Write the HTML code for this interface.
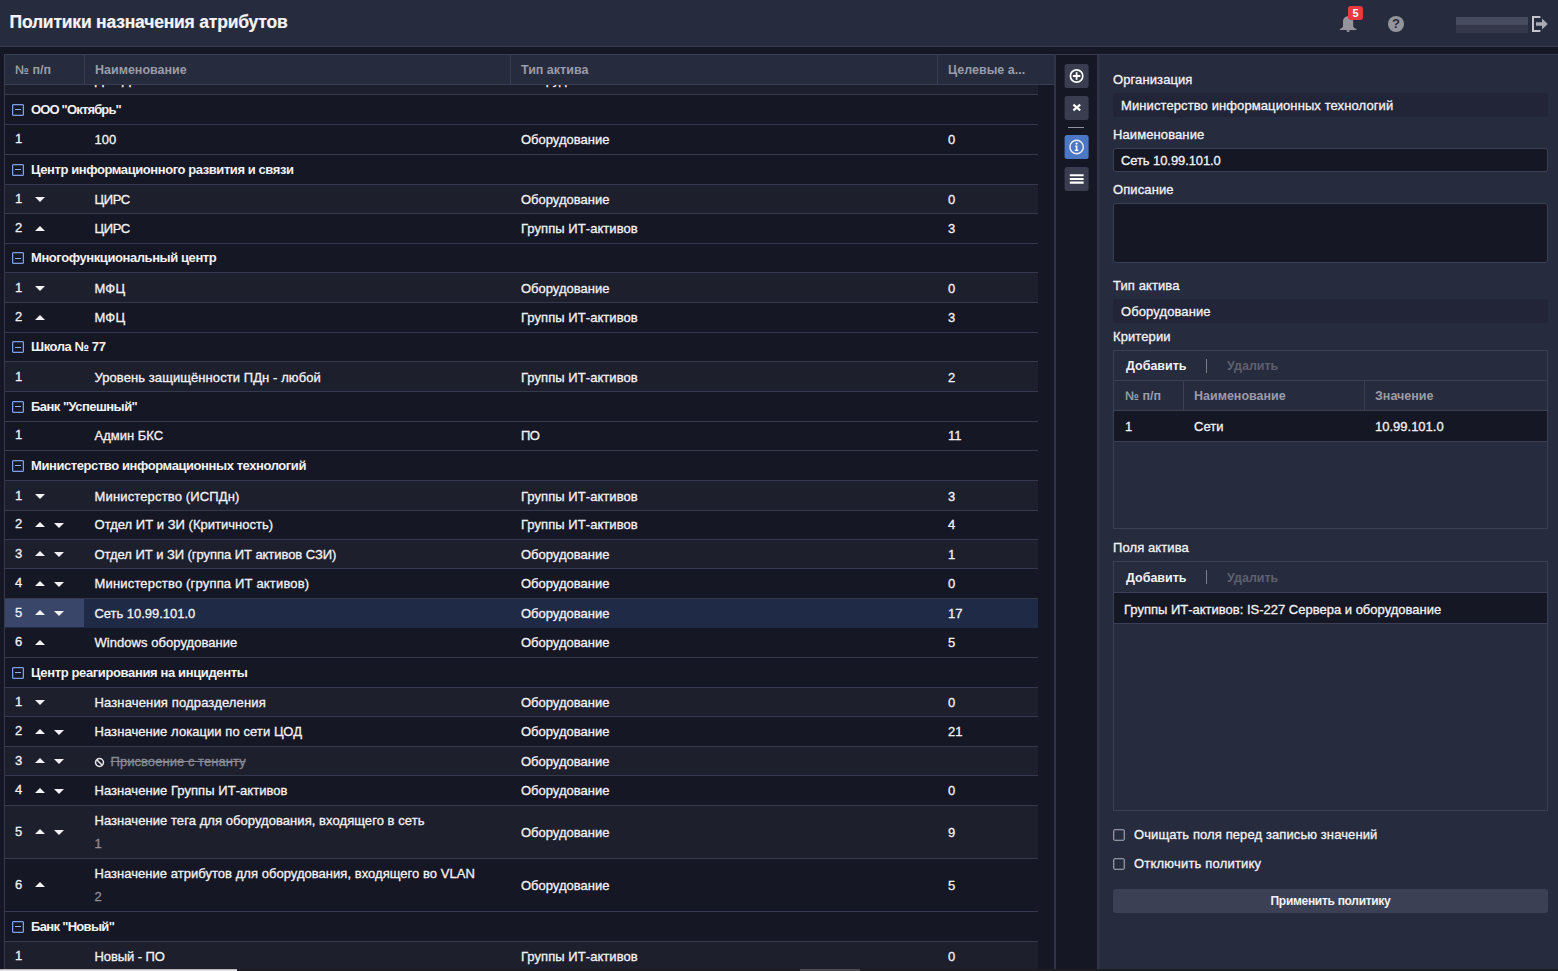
<!DOCTYPE html>
<html lang="ru">
<head>
<meta charset="utf-8">
<title>Политики назначения атрибутов</title>
<style>
*{box-sizing:border-box;margin:0;padding:0}
html,body{width:1558px;height:971px;overflow:hidden;background:#161724}
body{position:relative;font-family:"Liberation Sans",sans-serif;font-size:13px;color:#f2f2f4;-webkit-font-smoothing:antialiased;-webkit-text-stroke:.3px}
b,#hdr span,.box .th span,#apply,#badge,#help{-webkit-text-stroke:0}
i{font-style:normal;display:block}
/* ---------- top bar ---------- */
#top{position:absolute;left:0;top:0;width:1558px;height:47px;background:#272b3e;border-bottom:1px solid #3a3e53}
#title{-webkit-text-stroke:.2px;position:absolute;left:9.5px;top:10px;font-size:17.5px;font-weight:bold;line-height:24px;color:#f4f4f6;white-space:nowrap;letter-spacing:-0.2px}
#bell{position:absolute;left:1339px;top:15px;width:18px;height:18px}
#badge{position:absolute;left:1348px;top:6px;width:15px;height:14px;border-radius:3px;background:#e9383f;color:#fff;font-size:11px;font-weight:bold;line-height:14px;text-align:center}
#help{position:absolute;left:1388px;top:16px;width:16px;height:16px;border-radius:50%;background:#94959c;color:#272b3e;font-size:13px;font-weight:bold;line-height:16px;text-align:center}
#user{position:absolute;left:1456px;top:17px;width:72px;height:16px;background:linear-gradient(#474b5f 0,#474b5f 50%,#35384b 50%,#35384b 100%)}
#logout{position:absolute;left:1531px;top:15px;width:17px;height:18px}
/* ---------- grid ---------- */
#grid{position:absolute;left:0;top:0;width:1056px;height:971px}
#gl{position:absolute;left:4px;top:54px;width:1px;height:915px;background:#363a4e}
#hdr{position:absolute;left:4px;top:54px;width:1051px;height:31px;background:#272b3e;border:1px solid #3a3e53;border-right-color:#3a3e53}
#hdr span{position:absolute;top:0;height:29px;line-height:30px;font-weight:bold;color:#9a9ca8;white-space:nowrap;font-size:12.5px}
#hdr u{position:absolute;top:0;width:1px;height:29px;background:#3a3e53;text-decoration:none}
#scrollcol{position:absolute;left:1038px;top:85px;width:16px;height:884px;background:#161724}
#vline{position:absolute;left:1054px;top:54px;width:2px;height:915px;background:#30344a}
.r{position:absolute;left:5px;width:1033px;background:#161724;border-bottom:1px solid #35394c;white-space:nowrap;overflow:hidden}
.r.alt{background:#1e1f2d}
.r.sel{background:#1f2a47;border-bottom-color:#1f2a47}
.r.sel:before{content:"";position:absolute;left:0;top:0;width:79px;height:100%;background:#3a4669}
.r span,.r b{position:absolute;top:0;bottom:0;display:flex;align-items:center;line-height:16px}
.r .c1{transform:translateY(-1px)}
.r.alt .c1,.r.sel .c1{transform:none}
.r.alt .c2,.r.alt .c3,.r.alt .c4,.r.sel .c2,.r.sel .c3,.r.sel .c4{transform:translateY(1px)}
.r.tall .c2,.r.ns .c2,.r.ns .c3,.r.ns .c4{transform:none}
.r.tall .c3,.r.tall .c4{transform:translateY(1px)}
.r.tall .c1{transform:none}
.r.ns .c1{transform:translateY(-1px)}
.r .c1{left:10px}
.r .c2{left:89.5px}
.r .c3{left:516px}
.r .c4{left:943px}
.r.grp b{left:26px;font-weight:bold;letter-spacing:-0.42px}
.r .clip{top:-13px;bottom:auto;height:16px}
.bx{position:absolute;left:7px;top:50%;margin-top:-6px;width:12px;height:12px;border:1px solid #7d9fe6;border-radius:1px;box-shadow:inset 0 0 0 .5px rgba(125,159,230,.55)}
.bx:after{content:"";position:absolute;left:2px;right:2px;top:4.5px;height:1px;background:#8fb0f2}
.up,.dn{position:absolute;top:50%;width:0;height:0;border-left:5px solid transparent;border-right:5px solid transparent}
.up{border-bottom:5px solid #f2f2f4;margin-top:-3px}
.dn{border-top:5px solid #f2f2f4;margin-top:-2px}
.a1{left:30px}
.a2{left:49px}
.r .dis{color:#878993}
.r .dis s{text-decoration:line-through}
.ban{width:11px;height:11px;margin-left:-.5px;margin-right:5.5px;flex:none}
.r .two{display:block}
.r .two .l1{top:7px;bottom:auto;height:16px;left:0}
.r .two .l2{top:30px;bottom:auto;height:16px;left:0;color:#8c8e99}
/* ---------- toolbar ---------- */
#tb{position:absolute;left:1056px;top:54px;width:41px;height:915px;background:#161724}
.tbtn{position:absolute;left:1064px;width:25px;height:24px}
.tbtn svg{position:absolute;left:0;top:0;width:25px;height:24px}
#tsep{position:absolute;left:1068px;top:127px;width:16px;height:1px;background:#8f919c}
/* ---------- panel ---------- */
#panel{position:absolute;left:1097px;top:54px;width:461px;height:915px;background:#272b3e;border-left:2px solid #30344a}
.lbl{position:absolute;left:1113px;height:16px;line-height:16px;white-space:nowrap;color:#f2f2f4;letter-spacing:.1px}
.ro{position:absolute;left:1113px;width:435px;height:24px;background:#222537;border-radius:3px;line-height:26px;padding-left:8px;white-space:nowrap;letter-spacing:.1px;overflow:hidden}
.inp{position:absolute;left:1113px;width:435px;background:#161724;border:1px solid #3b3f53;border-radius:3px;line-height:24px;padding-left:7px;white-space:nowrap;overflow:hidden}
.box{position:absolute;left:1113px;width:435px;border:1px solid #3b3f53}
.box .bar{position:absolute;left:0;top:0;width:100%;height:30px;border-bottom:1px solid #3b3f53}
.box .bar b{position:absolute;top:0;line-height:31px;font-size:12.5px}
.box .bar .sep{position:absolute;left:92px;top:8px;width:1px;height:14px;background:#7a7c88}
.box .row{position:absolute;left:0;width:100%;height:30px;background:#161724;border-bottom:1px solid #3b3f53}
.box .row span,.box .th span{position:absolute;top:0;line-height:30px;white-space:nowrap}
.box .row span{line-height:32px}
.box .th{position:absolute;left:0;top:30px;width:100%;height:30px;border-bottom:1px solid #3b3f53}
.box .th span{font-weight:bold;color:#9a9ca8;font-size:12.5px}
.box .th u{position:absolute;top:0;width:1px;height:29px;background:#3b3f53}
.cb{position:absolute;left:1113px;width:12px;height:12px;border:1px solid #9092a0;border-radius:2px;box-shadow:inset 0 0 0 .6px rgba(144,146,160,.6)}
#apply{position:absolute;left:1113px;top:889px;width:435px;height:24px;border-radius:3px;background:#3c4055;font-weight:bold;font-size:12px;line-height:24px;text-align:center;color:#f2f2f4;letter-spacing:-0.3px}
.b2 .bar{height:31px!important}
.b2 .bar b{line-height:33px!important}
.b2 .row span{line-height:33px!important}
#topline{position:absolute;left:1056px;top:54px;width:502px;height:1px;background:#363a4e}
#bottom{position:absolute;left:0;top:969px;width:1558px;height:2px;background:#1d1d1f}
#bottom i{position:absolute;top:0;height:2px}
</style>
</head>
<body>
<div id="grid">
<div id="gl"></div>
<div class="r alt" style="top:85px;height:10px"><span class="clip" style="left:90px">Для ДИТ</span><span class="clip" style="left:516px">Оборудование</span></div>
<div class="r grp" style="top:95px;height:30px"><i class="bx"></i><b style="letter-spacing:-0.835px">ООО "Октябрь"</b></div>
<div class="r" style="top:125px;height:30px"><span class="c1">1</span><span class="c2">100</span><span class="c3">Оборудование</span><span class="c4">0</span></div>
<div class="r grp" style="top:155px;height:30px"><i class="bx"></i><b>Центр информационного развития и связи</b></div>
<div class="r alt" style="top:185px;height:29px"><span class="c1">1</span><i class="dn a1"></i><span class="c2" style="letter-spacing:-0.375px">ЦИРС</span><span class="c3">Оборудование</span><span class="c4">0</span></div>
<div class="r" style="top:214px;height:30px"><span class="c1">2</span><i class="up a1"></i><span class="c2" style="letter-spacing:-0.375px">ЦИРС</span><span class="c3" style="letter-spacing:0.059px">Группы ИТ-активов</span><span class="c4">3</span></div>
<div class="r grp" style="top:244px;height:29px"><i class="bx"></i><b>Многофункциональный центр</b></div>
<div class="r alt" style="top:273px;height:30px"><span class="c1">1</span><i class="dn a1"></i><span class="c2" style="letter-spacing:0.167px">МФЦ</span><span class="c3">Оборудование</span><span class="c4">0</span></div>
<div class="r" style="top:303px;height:30px"><span class="c1">2</span><i class="up a1"></i><span class="c2" style="letter-spacing:0.167px">МФЦ</span><span class="c3" style="letter-spacing:0.059px">Группы ИТ-активов</span><span class="c4">3</span></div>
<div class="r grp" style="top:333px;height:29px"><i class="bx"></i><b>Школа № 77</b></div>
<div class="r alt" style="top:362px;height:30px"><span class="c1">1</span><span class="c2" style="letter-spacing:0.078px">Уровень защищённости ПДн - любой</span><span class="c3" style="letter-spacing:0.059px">Группы ИТ-активов</span><span class="c4">2</span></div>
<div class="r grp" style="top:392px;height:30px"><i class="bx"></i><b style="letter-spacing:-0.533px">Банк "Успешный"</b></div>
<div class="r" style="top:422px;height:29px"><span class="c1">1</span><span class="c2">Админ БКС</span><span class="c3" style="letter-spacing:-0.500px">ПО</span><span class="c4">11</span></div>
<div class="r grp" style="top:451px;height:30px"><i class="bx"></i><b>Министерство информационных технологий</b></div>
<div class="r alt" style="top:481px;height:30px"><span class="c1">1</span><i class="dn a1"></i><span class="c2" style="letter-spacing:0.150px">Министерство (ИСПДн)</span><span class="c3" style="letter-spacing:0.059px">Группы ИТ-активов</span><span class="c4">3</span></div>
<div class="r" style="top:511px;height:29px"><span class="c1">2</span><i class="up a1"></i><i class="dn a2"></i><span class="c2" style="letter-spacing:0.019px">Отдел ИТ и ЗИ (Критичность)</span><span class="c3" style="letter-spacing:0.059px">Группы ИТ-активов</span><span class="c4">4</span></div>
<div class="r alt" style="top:540px;height:29px"><span class="c1">3</span><i class="up a1"></i><i class="dn a2"></i><span class="c2" style="letter-spacing:-0.054px">Отдел ИТ и ЗИ (группа ИТ активов СЗИ)</span><span class="c3">Оборудование</span><span class="c4">1</span></div>
<div class="r" style="top:569px;height:30px"><span class="c1">4</span><i class="up a1"></i><i class="dn a2"></i><span class="c2" style="letter-spacing:0.172px">Министерство (группа ИТ активов)</span><span class="c3">Оборудование</span><span class="c4">0</span></div>
<div class="r sel" style="top:599px;height:29px"><span class="c1">5</span><i class="up a1"></i><i class="dn a2"></i><span class="c2" style="letter-spacing:-0.031px">Сеть 10.99.101.0</span><span class="c3">Оборудование</span><span class="c4">17</span></div>
<div class="r" style="top:628px;height:30px"><span class="c1">6</span><i class="up a1"></i><span class="c2" style="letter-spacing:0.050px">Windows оборудование</span><span class="c3">Оборудование</span><span class="c4">5</span></div>
<div class="r grp" style="top:658px;height:30px"><i class="bx"></i><b style="letter-spacing:-0.365px">Центр реагирования на инциденты</b></div>
<div class="r alt" style="top:688px;height:29px"><span class="c1">1</span><i class="dn a1"></i><span class="c2" style="letter-spacing:0.146px">Назначения подразделения</span><span class="c3">Оборудование</span><span class="c4">0</span></div>
<div class="r" style="top:717px;height:30px"><span class="c1">2</span><i class="up a1"></i><i class="dn a2"></i><span class="c2" style="letter-spacing:0.067px">Назначение локации по сети ЦОД</span><span class="c3">Оборудование</span><span class="c4">21</span></div>
<div class="r alt" style="top:747px;height:29px"><span class="c1">3</span><i class="up a1"></i><i class="dn a2"></i><span class="c2 dis"><svg class="ban" viewBox="0 0 12 12"><circle cx="6" cy="6" r="4.3" fill="none" stroke="#e4e4e8" stroke-width="1.7"/><path d="M3 3 L9 9" stroke="#e4e4e8" stroke-width="1.7"/></svg><s style="letter-spacing:0.050px">Присвоение с тенанту</s></span><span class="c3">Оборудование</span><span class="c4"></span></div>
<div class="r" style="top:776px;height:30px"><span class="c1">4</span><i class="up a1"></i><i class="dn a2"></i><span class="c2" style="letter-spacing:0.054px">Назначение Группы ИТ-активов</span><span class="c3">Оборудование</span><span class="c4">0</span></div>
<div class="r alt tall" style="top:806px;height:53px"><span class="c1">5</span><i class="up a1"></i><i class="dn a2"></i><span class="c2 two"><span class="l1" style="letter-spacing:0.060px">Назначение тега для оборудования, входящего в сеть</span><span class="l2">1</span></span><span class="c3">Оборудование</span><span class="c4">9</span></div>
<div class="r tall" style="top:859px;height:53px"><span class="c1">6</span><i class="up a1"></i><span class="c2 two"><span class="l1" style="letter-spacing:0.036px">Назначение атрибутов для оборудования, входящего во VLAN</span><span class="l2">2</span></span><span class="c3">Оборудование</span><span class="c4">5</span></div>
<div class="r grp" style="top:912px;height:30px"><i class="bx"></i><b style="letter-spacing:-0.678px">Банк "Новый"</b></div>
<div class="r alt ns" style="top:942px;height:30px"><span class="c1">1</span><span class="c2" style="letter-spacing:-0.100px">Новый - ПО</span><span class="c3" style="letter-spacing:0.059px">Группы ИТ-активов</span><span class="c4">0</span></div>
<div id="hdr">
<span style="left:10px">№ п/п</span><u style="left:79px"></u>
<span style="left:90px">Наименование</span><u style="left:505px"></u>
<span style="left:516px">Тип актива</span><u style="left:932px"></u>
<span style="left:943px">Целевые а...</span>
</div>
<div id="scrollcol"></div>
<div id="vline"></div>
</div>

<div id="tb"></div>
<div class="tbtn" style="top:64px"><svg viewBox="0 0 25 24"><rect x=".6" y="0" width="24" height="24" rx="2.500" fill="#3a3d4f"/><g transform="translate(.6 0)"><circle cx="12" cy="12" r="6.2" fill="none" stroke="#fff" stroke-width="1.7"/><path d="M12 8.3v7.4M8.3 12h7.4" stroke="#fff" stroke-width="1.8" fill="none"/></g></svg></div>
<div class="tbtn" style="top:96px"><svg viewBox="0 0 25 24"><rect x=".6" y="0" width="24" height="24" rx="2.500" fill="#3a3d4f"/><g transform="translate(.6 0)"><path d="M8.800 8.700L15.600 14.400M15.600 8.700L8.800 14.400" stroke="#fff" stroke-width="2.200" fill="none"/></g></svg></div>
<div id="tsep"></div>
<div class="tbtn" style="top:135px"><svg viewBox="0 0 25 24"><rect x=".6" y="0" width="24" height="24" rx="2.500" fill="#4a78c4"/><g transform="translate(.6 0)"><circle cx="12" cy="12" r="6.700" fill="none" stroke="#f1ecf3" stroke-width="1.400"/><path d="M10.6 10.6h2.2v4.2h1v1.2h-3.6v-1.2h1v-3h-.6z" fill="#fff"/><circle cx="12" cy="8.6" r="1.1" fill="#fff"/></g></svg></div>
<div class="tbtn" style="top:167px"><svg viewBox="0 0 25 24"><rect x=".6" y="0" width="24" height="24" rx="2.500" fill="#3a3d4f"/><g transform="translate(.6 0)"><path d="M5.200 8.300h13.800M5.200 12h13.800M5.200 15.600h13.800" stroke="#fff" stroke-width="2.100" fill="none"/></g></svg></div>

<div id="panel"></div>
<div id="topline"></div>
<div class="lbl" style="top:72px">Организация</div>
<div class="ro" style="top:93px">Министерство информационных технологий</div>
<div class="lbl" style="top:127px">Наименование</div>
<div class="inp" style="top:148px;height:24px;letter-spacing:-.09px">Сеть 10.99.101.0</div>
<div class="lbl" style="top:182px">Описание</div>
<div class="inp" style="top:203px;height:60px"></div>
<div class="lbl" style="top:278px">Тип актива</div>
<div class="ro" style="top:299px">Оборудование</div>
<div class="lbl" style="top:329px">Критерии</div>
<div class="box" style="top:350px;height:179px">
  <div class="bar"><b style="left:12px">Добавить</b><i class="sep"></i><b style="left:113px;color:#5d6070">Удалить</b></div>
  <div class="th"><span style="left:11px">№ п/п</span><u style="left:69px"></u><span style="left:80px">Наименование</span><u style="left:250px"></u><span style="left:261px">Значение</span></div>
  <div class="row" style="top:60px;height:31px"><span style="left:11px">1</span><span style="left:80px">Сети</span><span style="left:261px">10.99.101.0</span></div>
</div>
<div class="lbl" style="top:540px">Поля актива</div>
<div class="box b2" style="top:561px;height:250px">
  <div class="bar"><b style="left:12px">Добавить</b><i class="sep"></i><b style="left:113px;color:#5d6070">Удалить</b></div>
  <div class="row" style="top:31px;height:31px"><span style="left:10px">Группы ИТ-активов: IS-227 Сервера и оборудование</span></div>
</div>
<i class="cb" style="top:829px"></i><div class="lbl" style="left:1134px;top:827px">Очищать поля перед записью значений</div>
<i class="cb" style="top:858px"></i><div class="lbl" style="left:1134px;top:856px;letter-spacing:.2px">Отключить политику</div>
<div id="apply">Применить политику</div>

<div id="top">
<div id="title">Политики назначения атрибутов</div>
<svg id="bell" viewBox="0 0 18 18"><path d="M9.100 1.200C6.100 1.200 4 3.400 4 6.500V11C4 12.300 2.600 13.200 .8 14.100V15H17.500V14.100C15.600 13.200 14.200 12.300 14.200 11V6.500C14.200 3.400 12.100 1.200 9.100 1.200zM7.200 15.300H11.100L10 17.100H8.300z" fill="#94959c"/></svg>
<div id="badge">5</div>
<div id="help">?</div>
<div id="user"></div>
<svg id="logout" viewBox="0 0 17 18"><path d="M9.400 2.100H2V15.900H9.400" fill="none" stroke="#c3c5cb" stroke-width="2"/><path d="M5 7.300h6V3.600L16.700 9 11 14.400V10.800H5z" fill="#a9abb3"/></svg>
</div>
<div id="bottom"><i style="left:0;width:237px;background:linear-gradient(#9a9a9c,#e6e6e6 60%)"></i><i style="left:800px;width:60px;background:#4a4a4c"></i></div>
</body>
</html>
